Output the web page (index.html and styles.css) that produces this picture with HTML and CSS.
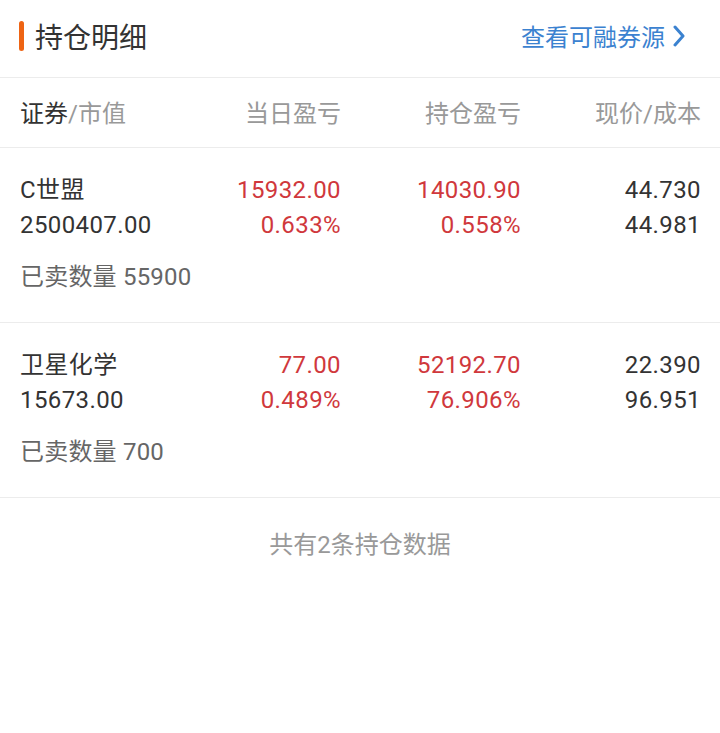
FILE: index.html
```html
<html>

<head>
    <title>持仓明细</title>
    <link rel="stylesheet" href="styles.css">
</head>

<body>
    <div class="panel">
        <header class="title-bar">
            <h2 class="title">持仓明细</h2>
            <a class="source-link" href="#">查看可融券源
                <svg class="chevron" width="14" height="22" viewBox="0 0 14 22">
                    <path d="M3 2 L11 11 L3 20" fill="none" stroke="#3b82d0" stroke-width="3" stroke-linecap="round" stroke-linejoin="round"/>
                </svg>
            </a>
        </header>

        <div class="grid head-row">
            <div class="cell left"><span class="dark">证券</span>/市值</div>
            <div class="cell">当日盈亏</div>
            <div class="cell">持仓盈亏</div>
            <div class="cell">现价/成本</div>
        </div>

        <div class="position">
            <div class="grid nums">
                <div class="cell left">C世盟<br>2500407.00</div>
                <div class="cell up">15932.00<br>0.633%</div>
                <div class="cell up">14030.90<br>0.558%</div>
                <div class="cell">44.730<br>44.981</div>
            </div>
            <div class="sold">已卖数量 55900</div>
        </div>

        <div class="position">
            <div class="grid nums">
                <div class="cell left">卫星化学<br>15673.00</div>
                <div class="cell up">77.00<br>0.489%</div>
                <div class="cell up">52192.70<br>76.906%</div>
                <div class="cell">22.390<br>96.951</div>
            </div>
            <div class="sold">已卖数量 700</div>
        </div>

        <div class="summary">共有2条持仓数据</div>
    </div>
</body>

</html>
```

FILE: styles.css
```css
body {
    margin: 0;
    padding: 0;
    background: #fff;
    font-family: Roboto, "Noto Sans CJK SC", sans-serif;
    color: #333;
}

.panel {
    width: 720px;
}

.title-bar {
    height: 78px;
    display: flex;
    align-items: center;
    justify-content: space-between;
    padding: 0 34px 6px 19px;
    border-bottom: 1px solid #ececec;
    box-sizing: border-box;
}

.title {
    margin: 0;
    font-size: 28px;
    font-weight: normal;
    color: #333;
    display: flex;
    align-items: center;
}

.title::before {
    content: "";
    width: 5px;
    height: 30px;
    border-radius: 3px;
    background: #ee6414;
    margin-right: 11px;
}

.source-link {
    font-size: 24px;
    color: #3b82d0;
    text-decoration: none;
    display: flex;
    align-items: center;
    gap: 7px;
}

.grid {
    display: grid;
    grid-template-columns: 1fr 180px 180px 180px;
    padding: 0 19px 0 20px;
    font-size: 24px;
    line-height: 35px;
}

.nums {
    letter-spacing: 0.4px;
}

.cell {
    text-align: right;
}

.cell.left {
    text-align: left;
}

.head-row {
    height: 70px;
    padding-top: 4px;
    box-sizing: border-box;
    align-items: center;
    color: #999;
    border-bottom: 1px solid #ececec;
}

.dark {
    color: #333;
}

.up {
    color: #d0383c;
}

.position {
    padding: 25px 0 27px;
    border-bottom: 1px solid #ececec;
}

.sold {
    padding: 0 20px;
    margin-top: 17px;
    font-size: 24px;
    line-height: 35px;
    letter-spacing: 0.2px;
    color: #666;
}

.summary {
    text-align: center;
    font-size: 24px;
    color: #999;
    padding-top: 27px;
}
```
